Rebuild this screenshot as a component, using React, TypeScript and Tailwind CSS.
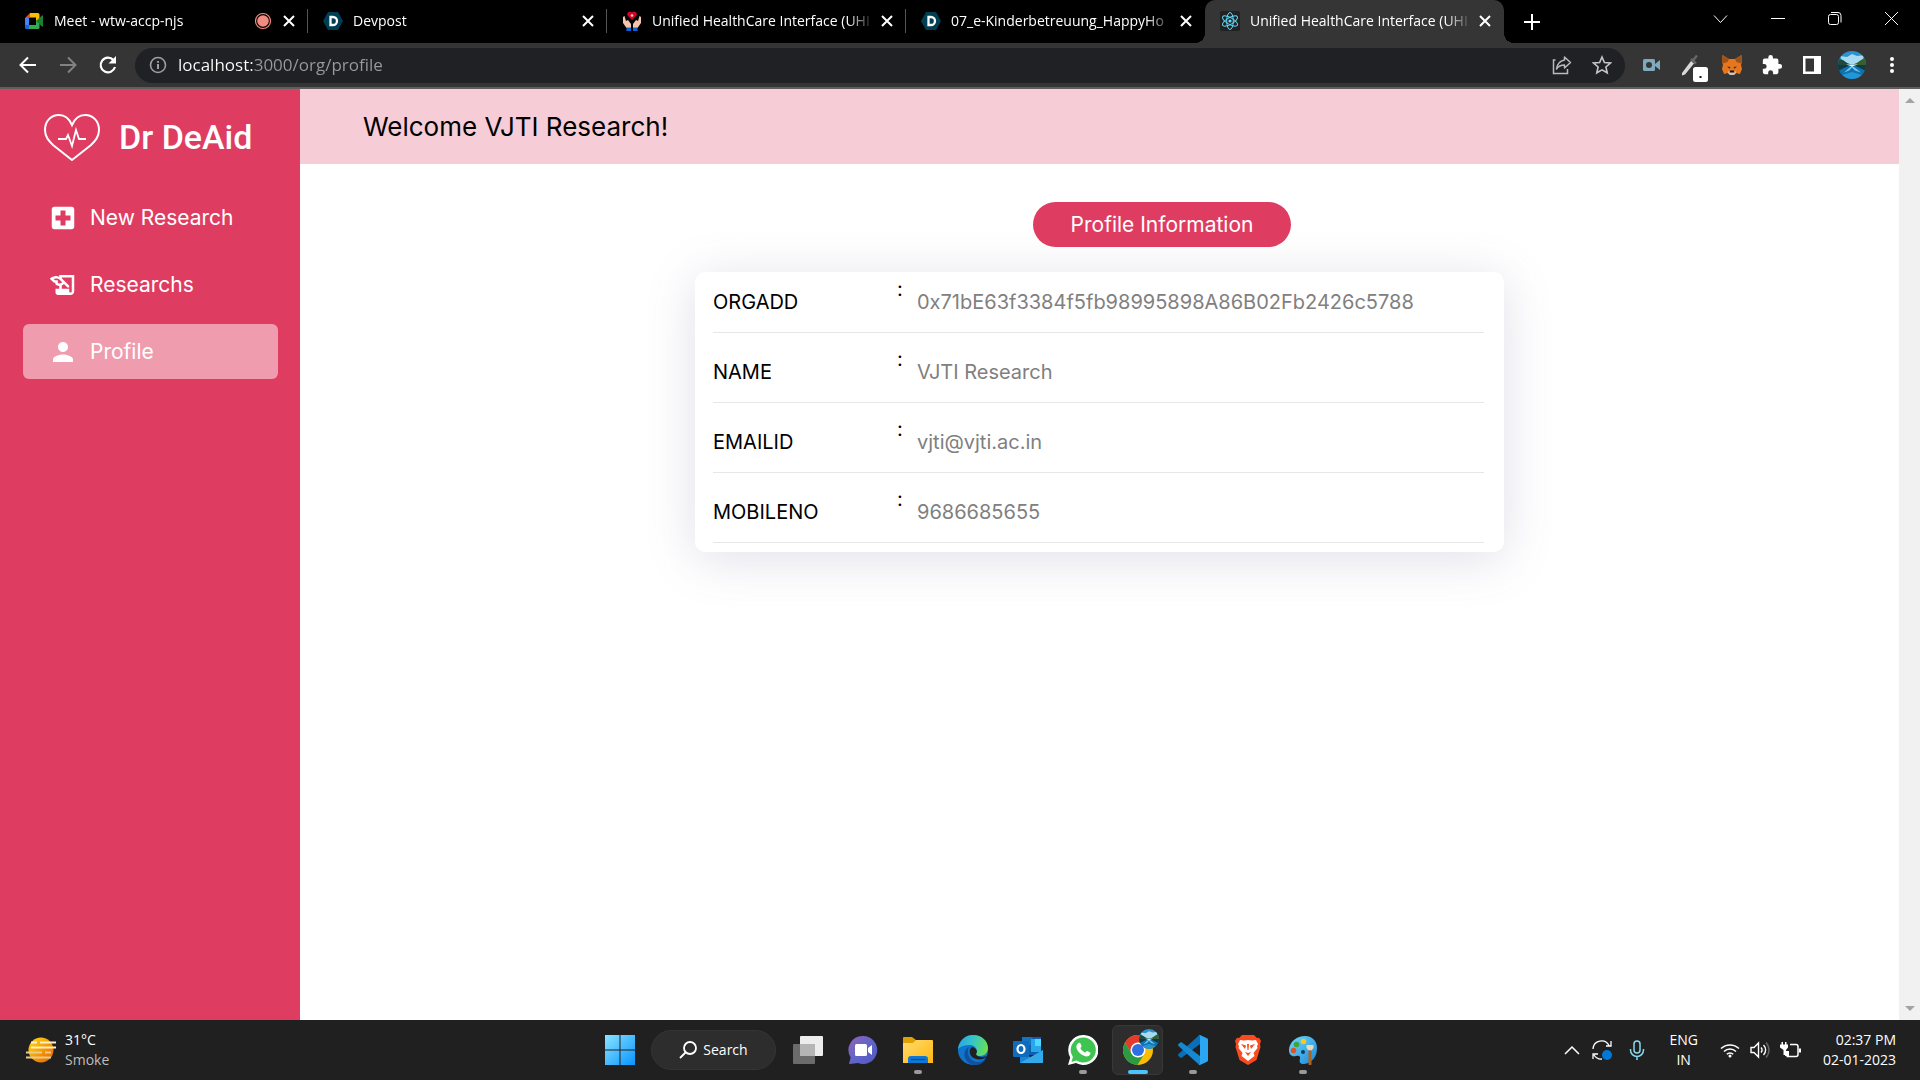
import { useState, type ReactNode } from "react";
import { MdHistoryEdu, MdLocalHospital, MdPerson } from "react-icons/md";

type Tab = {
  title: string;
  icon: ReactNode;
  recording?: boolean;
};

const tabs: Tab[] = [
  { title: "Meet - wtw-accp-njs", icon: <MeetIcon />, recording: true },
  { title: "Devpost", icon: <DevpostIcon /> },
  { title: "Unified HealthCare Interface (UHI", icon: <HandsIcon /> },
  { title: "07_e-Kinderbetreuung_HappyHo", icon: <DevpostIcon /> },
  { title: "Unified HealthCare Interface (UHI", icon: <ReactIcon /> },
];

const navItems = [
  { label: "New Research", href: "#new", Icon: MdLocalHospital },
  { label: "Researchs", href: "#researchs", Icon: MdHistoryEdu },
  { label: "Profile", href: "#profile", Icon: MdPerson },
];

const profile = [
  { label: "ORGADD", value: "0x71bE63f3384f5fb98995898A86B02Fb2426c5788" },
  { label: "NAME", value: "VJTI Research" },
  { label: "EMAILID", value: "vjti@vjti.ac.in" },
  { label: "MOBILENO", value: "9686685655" },
];

const apps = [
  { name: "Task View", icon: <TaskViewIcon />, mark: "" },
  { name: "Chat", icon: <ChatIcon />, mark: "" },
  { name: "File Explorer", icon: <ExplorerIcon />, mark: "open" },
  { name: "Edge", icon: <EdgeIcon />, mark: "" },
  { name: "Outlook", icon: <OutlookIcon />, mark: "" },
  { name: "WhatsApp", icon: <WhatsAppIcon />, mark: "open" },
  { name: "Chrome", icon: <ChromeIcon />, mark: "active" },
  { name: "VS Code", icon: <CodeIcon />, mark: "open" },
  { name: "Brave", icon: <BraveIcon />, mark: "" },
  { name: "Paint", icon: <PaintIcon />, mark: "open" },
];

export default function App() {
  return (
    <div className="flex h-screen flex-col overflow-hidden bg-white font-['Open_Sans',sans-serif]">
      <TabStrip />
      <Toolbar />
      <div className="flex min-h-0 flex-1 font-['Inter',sans-serif]">
        <Sidebar />
        <Main />
        <Scrollbar />
      </div>
      <Taskbar />
    </div>
  );
}

function TabStrip() {
  const [active, setActive] = useState(4);
  return (
    <div className="flex h-[43px] shrink-0 bg-black pl-[9px] text-sm text-white">
      <div className="flex min-w-0 flex-1">
        {tabs.map((tab, i) => (
          <div
            key={i}
            className={[
              "relative flex w-[299px] min-w-0 items-center pr-[10px] pb-px pl-[15px]",
              i === active ? "rounded-t-[10px] bg-[#353535]" : "",
            ].join(" ")}
          >
            {i === active && (
              <>
                <span className="absolute bottom-0 -left-[10px] h-[10px] w-[10px] bg-[radial-gradient(circle_at_0_0,#000_10px,#353535_10px)]" />
                <span className="absolute -right-[10px] bottom-0 h-[10px] w-[10px] bg-[radial-gradient(circle_at_100%_0,#000_10px,#353535_10px)]" />
              </>
            )}
            {i !== active && i !== active - 1 && (
              <span className="absolute right-0 h-6 w-px bg-[#555]" />
            )}
            <button
              type="button"
              onClick={() => setActive(i)}
              className="flex min-w-0 flex-1 items-center gap-[10px] text-left"
            >
              {tab.icon}
              <span className="min-w-0 flex-1 overflow-hidden whitespace-nowrap [mask-image:linear-gradient(to_right,#000_88%,transparent)]">
                {tab.title}
              </span>
            </button>
            {tab.recording && (
              <svg viewBox="0 0 18 18" className="mx-1 h-[18px] w-[18px] shrink-0">
                <circle cx="9" cy="9" r="7.5" fill="none" stroke="#f28b82" strokeWidth="1.2" />
                <circle cx="9" cy="9" r="5.8" fill="#f28b82" />
              </svg>
            )}
            <button type="button" aria-label="Close tab" className="ml-1 flex h-[18px] w-[18px] shrink-0 items-center justify-center">
              <svg viewBox="0 0 12 12" className="h-3 w-3 stroke-white" strokeWidth="2">
                <path d="M1 1l10 10M11 1L1 11" />
              </svg>
            </button>
          </div>
        ))}
        <button type="button" aria-label="New tab" className="ml-[19px] flex w-[18px] items-center justify-center">
          <svg viewBox="0 0 16 16" className="h-4 w-4 stroke-white" strokeWidth="2">
            <path d="M8 0v16M0 8h16" />
          </svg>
        </button>
      </div>
      <div className="flex h-[38px] shrink-0 items-center">
        <WindowButton label="Search tabs">
          <path d="M1 4.500l6.500 7 6.500-7" />
        </WindowButton>
        <WindowButton label="Minimize">
          <path d="M1 7.500h14" />
        </WindowButton>
        <WindowButton label="Restore">
          <rect x="1.500" y="3.500" width="10" height="10" rx="2" />
          <path d="M4 1.500h7a3 3 0 0 1 3 3v7" />
        </WindowButton>
        <WindowButton label="Close">
          <path d="M1 1l13 13M14 1L1 14" />
        </WindowButton>
      </div>
    </div>
  );
}

function WindowButton({ label, children }: { label: string; children: ReactNode }) {
  return (
    <button type="button" aria-label={label} className="flex h-full w-[57px] items-center justify-center">
      <svg viewBox="0 0 16 16" className="h-4 w-4 fill-none stroke-white">
        {children}
      </svg>
    </button>
  );
}

function ToolButton({ label, children }: { label: string; children: ReactNode }) {
  return (
    <button type="button" aria-label={label} className="flex h-9 w-10 shrink-0 items-center justify-center">
      {children}
    </button>
  );
}

function Toolbar() {
  return (
    <div className="flex h-[46px] shrink-0 items-center border-b-2 border-[#5f5f5f] bg-[#353535] px-2">
      <ToolButton label="Back">
        <svg viewBox="0 0 20 20" className="h-5 w-5 fill-none stroke-white" strokeWidth="2">
          <path d="M18 10H3M10 2.500L2.500 10l7.500 7.500" />
        </svg>
      </ToolButton>
      <ToolButton label="Forward">
        <svg viewBox="0 0 20 20" className="h-5 w-5 fill-none stroke-[#828282]" strokeWidth="2">
          <path d="M2 10h15M10 2.500l7.500 7.500-7.500 7.500" />
        </svg>
      </ToolButton>
      <ToolButton label="Reload">
        <svg viewBox="0 0 20 20" className="h-5 w-5 fill-none stroke-white" strokeWidth="2.200">
          <path d="M17 12a7.300 7.300 0 1 1-1.600-6.900L17 7" />
          <path d="M18 1v7.500h-7.500z" fill="white" stroke="none" />
        </svg>
      </ToolButton>
      <div className="ml-[7px] flex h-[35px] min-w-0 flex-1 items-center rounded-full bg-[#202124] pr-[3px] pl-[14px]">
        <svg viewBox="0 0 18 18" className="h-[18px] w-[18px] shrink-0 fill-none stroke-[#9aa0a6]" strokeWidth="1.600">
          <circle cx="9" cy="9" r="7.500" />
          <path d="M9 8v5M9 5v1.800" strokeWidth="2" />
        </svg>
        <input
          type="text"
          aria-label="Address"
          defaultValue="localhost:3000/org/profile"
          className="ml-[11px] min-w-0 flex-1 bg-[linear-gradient(to_right,#fff_75px,#9a9a9a_75px)] bg-clip-text text-[17px] text-transparent outline-none"
        />
        <ToolButton label="Share">
          <svg viewBox="0 0 20 20" className="h-5 w-5 fill-none stroke-[#b8babd]" strokeWidth="1.500">
            <path d="M3.500 5H1.500v13.500h14V14" />
            <path d="M12.500 2l6 5.500-6 5.500V10C9 10 6.500 11 4.500 14c.5-4.500 3-8 8-9z" strokeLinejoin="round" />
          </svg>
        </ToolButton>
        <ToolButton label="Bookmark">
          <svg viewBox="0 0 20 20" className="h-5 w-5 fill-none stroke-[#c4c6c9]" strokeWidth="1.600">
            <path d="M10 2l2.400 5.500 6 .5-4.500 4 1.300 5.800L10 14.800l-5.200 3L6.100 12 1.600 8l6-.5z" />
          </svg>
        </ToolButton>
      </div>
      <div className="ml-[7px] flex shrink-0 items-center">
        <ToolButton label="Recorder">
          <svg viewBox="0 0 18 14" className="h-[14px] w-[18px]">
            <rect y="1" width="12" height="12" rx="1.500" fill="#7fa9bd" />
            <path d="M12 6l5-4v10l-5-4z" fill="#7fa9bd" />
            <circle cx="6" cy="7" r="3" fill="#353535" />
          </svg>
        </ToolButton>
        <ToolButton label="Color picker">
          <svg viewBox="0 0 28 30" className="mt-2 ml-[6px] h-[30px] w-7">
            <path d="M1 19L10 7l3 2.500L4 20.500l-3 1z" fill="#d9d9d9" />
            <path d="M10 5l5 4.500M12 6.500L16 1.500" stroke="#666" strokeWidth="2.500" />
            <rect x="12" y="13" width="15" height="15" rx="2.500" fill="white" />
            <rect x="18.500" y="22" width="2" height="2" fill="#111" />
          </svg>
        </ToolButton>
        <ToolButton label="MetaMask">
          <svg viewBox="0 0 20 20" className="h-5 w-5">
            <path d="M.5 0L7 4h6l6.500-4 .5 7-1 3 1 4-2 5-4-1-2 2H8l-2-2-4 1-2-5 1-4-1-3z" fill="#e8761c" />
            <path d="M.5 0L7 4 5.500 7 1 8.500 0 7zM19.500 0L13 4l1.500 3L19 8.500l1-1.500z" fill="#a0521d" />
            <path d="M5 11.500l3.500.5-1 1.800zM15 11.500l-3.500.5 1 1.800z" fill="#233447" />
            <path d="M6.500 16h7l.5 2-2 2H8l-2-2z" fill="#d7c1b3" />
            <path d="M8 15.500h4l.5 2h-5z" fill="#161616" />
          </svg>
        </ToolButton>
        <ToolButton label="Extensions">
          <svg viewBox="0 0 24 24" className="h-[22px] w-[22px] fill-white">
            <path d="M20.500 11H19V7a2 2 0 0 0-2-2h-4V3.500a2.500 2.500 0 0 0-5 0V5H4a2 2 0 0 0-2 2v3.800h1.500a2.700 2.700 0 0 1 0 5.400H2V20a2 2 0 0 0 2 2h3.800v-1.500a2.700 2.700 0 0 1 5.400 0V22H17a2 2 0 0 0 2-2v-4h1.500a2.500 2.500 0 0 0 0-5z" />
          </svg>
        </ToolButton>
        <ToolButton label="Side panel">
          <svg viewBox="0 0 18 18" className="h-[18px] w-[18px]">
            <path d="M0 0h18v18H0z" fill="white" />
            <path d="M2.500 2.500H11v13H2.500z" fill="#353535" />
          </svg>
        </ToolButton>
        <ToolButton label="Profile">
          <LakeAvatar className="h-7 w-7" />
        </ToolButton>
        <ToolButton label="Menu">
          <svg viewBox="0 0 4 20" className="h-5 w-1 fill-white">
            <circle cx="2" cy="4" r="2" />
            <circle cx="2" cy="10" r="2" />
            <circle cx="2" cy="16" r="2" />
          </svg>
        </ToolButton>
      </div>
    </div>
  );
}

function Sidebar() {
  const [current, setCurrent] = useState("Profile");
  return (
    <aside className="w-[300px] shrink-0 bg-[#df3c61] pr-[22px] pl-[23px] text-white">
      <div className="flex items-center gap-[18px] pt-[24px] pl-5">
        <svg viewBox="0 0 58 50" className="h-[50px] w-[58px] fill-none stroke-white" strokeWidth="2">
          <path d="M29 12C26 5 21 2 16 2 8 2 2 8 2 17c0 7 4 11 8 15l19 15 19-15c4-4 8-8 8-15 0-9-6-15-14-15-5 0-10 3-13 10z" />
          <path d="M15 26h8l2-4 4 11 4-16 3 9h7" strokeWidth="1.800" />
        </svg>
        <span className="pb-[2px] font-['Roboto',sans-serif] text-[34px] leading-[48px] font-medium whitespace-nowrap">
          Dr DeAid
        </span>
      </div>
      <nav className="mt-[27px] flex flex-col gap-3">
        {navItems.map(({ label, href, Icon }) => (
          <a
            key={label}
            href={href}
            onClick={() => setCurrent(label)}
            className={[
              "flex h-[55px] items-center gap-3 rounded-md pl-[25px] text-[21px]",
              label === current ? "bg-[#f09caf]" : "",
            ].join(" ")}
          >
            <Icon size={30} />
            {label}
          </a>
        ))}
      </nav>
    </aside>
  );
}

function Main() {
  return (
    <main className="min-w-0 flex-1 bg-white text-black">
      <header className="flex h-[75px] items-center bg-[#f6ccd6] px-[63px]">
        <h1 className="text-[26px]">Welcome VJTI Research!</h1>
      </header>
      <div className="flex justify-center pt-[38px] pl-[125px]">
        <button type="button" className="h-[45px] w-[258px] rounded-full bg-[#df3c61] text-[21px] text-white">
          Profile Information
        </button>
      </div>
      <dl className="mx-auto mt-[25px] flex w-full max-w-[809px] flex-col gap-[9px] rounded-[10px] bg-white pr-5 pb-[9px] pl-[18px] text-xl shadow-[0_7px_50px_rgba(100,100,150,0.2)]">
        {profile.map(({ label, value }) => (
          <div key={label} className="flex h-[61px] items-center border-b border-[#e5e7eb]">
            <dt className="flex w-[204px] self-stretch">
              <span className="w-[184px] self-center">{label}</span>
              <span className="pt-[3px]">:</span>
            </dt>
            <dd className="text-[#808080]">{value}</dd>
          </div>
        ))}
      </dl>
    </main>
  );
}

function Scrollbar() {
  return (
    <div className="flex w-[21px] shrink-0 flex-col items-center justify-between bg-[#f1f1f1] py-[9px]">
      <svg viewBox="0 0 10 5" className="h-[5px] w-[10px] fill-[#a3a3a3]">
        <path d="M0 5l5-5 5 5z" />
      </svg>
      <svg viewBox="0 0 10 5" className="h-[5px] w-[10px] fill-[#a3a3a3]">
        <path d="M0 0l5 5 5-5z" />
      </svg>
    </div>
  );
}

function Taskbar() {
  return (
    <footer className="flex h-[60px] shrink-0 items-center bg-[#202020] text-sm text-white">
      <div className="flex flex-1 items-center gap-[9px] pl-[26px]">
        <svg viewBox="0 0 30 26" className="h-[26px] w-[30px]">
          <defs>
            <linearGradient id="sun" x1="0" y1="0" x2="1" y2="1">
              <stop offset="0.2" stopColor="#fdc50d" />
              <stop offset="1" stopColor="#ea5a00" />
            </linearGradient>
          </defs>
          <circle cx="15" cy="13" r="12.500" fill="url(#sun)" />
          <path d="M5 5.500h6M14 5.500h16M5 10.500h25" stroke="#fff0c2" strokeWidth="2.200" />
          <path d="M0 15.500h16M19 15.500h6M0 20.500h25" stroke="#e6cd8e" strokeWidth="2.200" />
        </svg>
        <div className="leading-5">
          <div>31°C</div>
          <div className="text-[#bdbdbd]">Smoke</div>
        </div>
      </div>
      <div className="flex items-center">
        <button type="button" aria-label="Start" className="flex h-[50px] w-[55px] items-center justify-center">
          <svg viewBox="0 0 30 30" className="h-[30px] w-[30px]">
            <defs>
              <linearGradient id="win" x1="0" y1="0" x2="30" y2="30" gradientUnits="userSpaceOnUse">
                <stop stopColor="#8be4ff" />
                <stop offset="1" stopColor="#0794ff" />
              </linearGradient>
            </defs>
            <path d="M0 0h14.500v14.500H0zM15.500 0H30v14.500H15.500zM0 15.500h14.500V30H0zM15.500 15.500H30V30H15.500z" fill="url(#win)" />
          </svg>
        </button>
        <button
          type="button"
          className="mx-1 flex h-10 w-[125px] items-center justify-center gap-[6px] rounded-full border border-[#343434] bg-[#2d2d2d]"
        >
          <svg viewBox="0 0 18 18" className="h-[18px] w-[18px] fill-none stroke-white" strokeWidth="1.800">
            <circle cx="11" cy="7" r="6" />
            <path d="M6.500 11.500L1 17" />
          </svg>
          Search
        </button>
        {apps.map(({ name, icon, mark }) => (
          <button
            key={name}
            type="button"
            aria-label={name}
            className={[
              "relative flex h-[50px] items-center justify-center",
              mark === "active" ? "mx-[2px] w-[51px] rounded-md border border-[#383838] bg-[#2d2d2d]" : "w-[55px]",
            ].join(" ")}
          >
            {icon}
            {mark === "open" && <span className="absolute bottom-[1px] h-1 w-2 rounded-full bg-[#9a9a9a]" />}
            {mark === "active" && <span className="absolute bottom-0 h-1 w-5 rounded-full bg-[#4cc2ff]" />}
          </button>
        ))}
      </div>
      <div className="flex flex-1 items-center justify-end pr-6">
        <svg viewBox="0 0 16 10" className="h-[10px] w-4 fill-none stroke-white" strokeWidth="1.500">
          <path d="M1 9l7-7 7 7" />
        </svg>
        <svg viewBox="0 0 20 20" className="ml-3 h-5 w-5 fill-none stroke-white" strokeWidth="1.300">
          <path d="M1 9a8.500 8.500 0 0 1 16-3.500M19 1v5h-5M1 19v-5h5M2 15c2 3 5 4.500 8 4" />
          <circle cx="15" cy="15" r="5" fill="#0078d7" stroke="none" />
        </svg>
        <svg viewBox="0 0 16 20" className="ml-[17px] h-5 w-4 fill-none stroke-[#86d9f0]" strokeWidth="1.500">
          <rect x="5" y="1" width="6" height="12" rx="3" />
          <path d="M1.500 9v1a6.500 6.500 0 0 0 13 0V9M8 16.500V20" />
        </svg>
        <div className="ml-6 text-center leading-5">
          <div>ENG</div>
          <div>IN</div>
        </div>
        <svg viewBox="0 0 20 16" className="ml-[22px] h-4 w-5 fill-none stroke-white" strokeWidth="1.500">
          <path d="M1 6.500a13 13 0 0 1 18 0M4 9.500a8.500 8.500 0 0 1 12 0M6.800 12.300a4.500 4.500 0 0 1 6.400 0" />
          <circle cx="10" cy="14" r="1.500" fill="white" stroke="none" />
        </svg>
        <svg viewBox="0 0 20 18" className="ml-[10px] h-[18px] w-5 fill-none stroke-white" strokeWidth="1.400">
          <path d="M1 6.500h3L8.500 2v14L4 11.500H1zM11 6.500a3.500 3.500 0 0 1 0 5M13.500 4a7 7 0 0 1 0 10" />
          <path d="M16 1.500a11 11 0 0 1 0 15" stroke="#666" />
        </svg>
        <svg viewBox="0 0 21 16" className="ml-[10px] h-4 w-[21px] fill-none stroke-white" strokeWidth="1.500">
          <path d="M10 2.500h6a2 2 0 0 1 2 2v8a2 2 0 0 1-2 2H6.500" />
          <path d="M19 6.500h2v4h-2zM6 9h3v5H5z" fill="white" stroke="none" />
          <path d="M1.500 0h1.500v2.500h2V0h1.500v2.500H8V5.500L6 8v5H3.500V8L0 5.500V2.500h1.500z" fill="white" stroke="none" />
        </svg>
        <div className="ml-[22px] text-right leading-5">
          <div>02:37 PM</div>
          <div>02-01-2023</div>
        </div>
      </div>
    </footer>
  );
}

function MeetIcon() {
  return (
    <svg viewBox="0 0 20 16" className="h-4 w-5 shrink-0">
      <path d="M1 5l5-5v5z" fill="#ea4335" />
      <path d="M1 5h4v7H1z" fill="#4285f4" />
      <path d="M1 12h4v4H2a1 1 0 0 1-1-1z" fill="#1967d2" />
      <path d="M6 0h8a1.500 1.500 0 0 1 1.500 1.500V7L12 8V4.500H6z" fill="#fbbc04" />
      <path d="M5 12h7V8l3.500-1v7.500A1.500 1.500 0 0 1 14 16H5z" fill="#34a853" />
      <path d="M12 8l6-5.500c.5-.4 1-.2 1 .4v10.200c0 .6-.5.8-1 .4z" fill="#188038" />
    </svg>
  );
}

function DevpostIcon() {
  return (
    <svg viewBox="0 0 20 18" className="h-[18px] w-5 shrink-0">
      <path d="M5 0h10l5 9-5 9H5L0 9z" fill="#003e54" />
      <path d="M7.500 5H10a4 4 0 0 1 0 8H7.500z" fill="none" stroke="white" strokeWidth="2.300" />
    </svg>
  );
}

function HandsIcon() {
  return (
    <svg viewBox="0 0 20 20" className="h-5 w-5 shrink-0">
      <path d="M10 9L6 5a2.500 2.500 0 0 1 4-3.500A2.500 2.500 0 0 1 14 5z" fill="#d80027" />
      <circle cx="10" cy="4.500" r="1.300" fill="#cfd5dc" />
      <path d="M1 6l1.500-1 1.500 5 2-1 3 4v4H4.500L1 12zM19 6l-1.500-1-1.500 5-2-1-3 4v4h4.500L19 12z" fill="#f4c4ac" />
      <path d="M4.500 16.500H9V20H4.500zM11 16.500h4.500V20H11z" fill="#0b64d8" />
    </svg>
  );
}

function ReactIcon() {
  return (
    <svg viewBox="0 0 20 20" className="h-5 w-5 shrink-0">
      <rect width="20" height="20" rx="2" fill="#222" />
      <g fill="none" stroke="#61dafb" strokeWidth="1">
        <ellipse cx="10" cy="10" rx="8.500" ry="3.300" transform="rotate(30 10 10)" />
        <ellipse cx="10" cy="10" rx="8.500" ry="3.300" transform="rotate(90 10 10)" />
        <ellipse cx="10" cy="10" rx="8.500" ry="3.300" transform="rotate(150 10 10)" />
      </g>
      <circle cx="10" cy="10" r="1.600" fill="#61dafb" />
    </svg>
  );
}

function LakeAvatar({ className }: { className: string }) {
  return (
    <svg viewBox="0 0 28 28" className={`${className} overflow-hidden rounded-full`}>
      <path d="M0 0h28v14H0z" fill="#2b93cf" />
      <path d="M0 14h28v14H0z" fill="#0f72b0" />
      <path d="M2 5l7 1 5-3 5 2 8-1-3 5-7 4h-6L4 9z" fill="#a9daf0" />
      <path d="M0 8l5 1 4 3 5 2H0z" fill="#1d4a3c" />
      <path d="M28 7l-5 2-4 3-5 2h14z" fill="#355f2d" />
      <path d="M0 14h13l-7 3-6 3zM28 14H15l7 3 6 3z" fill="#0f3a45" />
      <path d="M14 14.500l-8 7 5-2 3-3 3 3 6 2z" fill="#7cc6ea" />
      <path d="M8 13.500h12l-6 2z" fill="#e2f4fb" />
      <path d="M4 24l10-3 10 3-5 4H9z" fill="#2496d6" />
    </svg>
  );
}

function TaskViewIcon() {
  return (
    <svg viewBox="0 0 30 28" className="h-7 w-[30px]">
      <rect y="8" width="22" height="20" rx="1" fill="#6b6b6b" />
      <rect x="7" width="23" height="20" rx="1" fill="#ededed" />
      <path d="M7 8h15v12H7z" fill="#b5b5b5" />
    </svg>
  );
}

function ChatIcon() {
  return (
    <svg viewBox="0 0 30 30" className="h-[30px] w-[30px]">
      <defs>
        <linearGradient id="chat" x1="0" y1="0" x2="1" y2="1">
          <stop stopColor="#9163b8" />
          <stop offset="0.5" stopColor="#6264c7" />
          <stop offset="1" stopColor="#5058c8" />
        </linearGradient>
      </defs>
      <path d="M15 1a14 14 0 1 1-5 27l-8 1c-1 0-1-.5-.8-1l1.500-5.500A14 14 0 0 1 15 1z" fill="url(#chat)" />
      <rect x="7" y="9" width="12" height="12" rx="1.500" fill="white" />
      <path d="M20 13l4-3v10l-4-3z" fill="white" />
    </svg>
  );
}

function ExplorerIcon() {
  return (
    <svg viewBox="0 0 30 28" className="h-7 w-[30px]">
      <defs>
        <linearGradient id="folder" x1="0" y1="0" x2="1" y2="1">
          <stop stopColor="#ffdc70" />
          <stop offset="1" stopColor="#ffb70d" />
        </linearGradient>
      </defs>
      <path d="M0 2a1 1 0 0 1 1-1h8l4 3h10v8H0z" fill="#e0a000" />
      <path d="M0 7h10l3-3h16a1 1 0 0 1 1 1v22H0z" fill="url(#folder)" />
      <path d="M5 27v-4a3 3 0 0 1 3-3h14a3 3 0 0 1 3 3v4z" fill="#0f78d4" />
      <path d="M8 23.500h14" stroke="#07508f" strokeWidth="1.300" />
    </svg>
  );
}

function EdgeIcon() {
  return (
    <svg viewBox="0 0 30 30" className="h-[30px] w-[30px]">
      <defs>
        <linearGradient id="edgeTop" x1="0" y1="0.300" x2="1" y2="0.500">
          <stop stopColor="#2aa5e6" />
          <stop offset="0.5" stopColor="#36c7c4" />
          <stop offset="1" stopColor="#6be04f" />
        </linearGradient>
      </defs>
      <circle cx="15" cy="15" r="15" fill="#1074cc" />
      <path d="M0 14C1 6 7 0 15 0c9 0 15 6 15 13 0 5-4 8-8 8-3 0-5-1-4-3 2-3 0-7-5-8-5-.5-10 1-13 4z" fill="url(#edgeTop)" />
      <path d="M11 12c-3 6 0 14 8 15 4 .5 7-1 9-4-3 9-17 10-21 0-1.500-5 0-9 4-11z" fill="#10509e" />
      <path d="M14 12c-4 3-3 10 4 12 4 1 8 0 10-2l2-1c-3 1-11 2-12-2 2-2 1-6-4-7z" fill="#202020" />
    </svg>
  );
}

function OutlookIcon() {
  return (
    <svg viewBox="0 0 30 28" className="h-7 w-[30px]">
      <path d="M9 1h19v18H9z" fill="#0f5fae" />
      <path d="M9 1h10v8H9z" fill="#1672c4" />
      <path d="M18 3h10v13H18z" fill="#28a8ea" />
      <path d="M22 3h6v7h-6z" fill="#50d9ff" />
      <path d="M7 15l12 7 11-8v13H7z" fill="#1784d8" />
      <path d="M7 27l23-13v12a1 1 0 0 1-1 1z" fill="#32a9e8" />
      <rect y="5" width="16" height="16" rx="1" fill="#0f6cbd" />
      <ellipse cx="8" cy="13" rx="3.500" ry="4" fill="none" stroke="white" strokeWidth="2.200" />
    </svg>
  );
}

function WhatsAppIcon() {
  return (
    <svg viewBox="0 0 30 30" className="h-[30px] w-[30px]">
      <path d="M15 0a15 15 0 1 1-7 28L0 30l2.200-7.500A15 15 0 0 1 15 0z" fill="white" />
      <path d="M15 2.500A12.500 12.500 0 1 1 8.500 25.500l-5 1.500 1.400-5A12.500 12.500 0 0 1 15 2.500z" fill="#3fc351" />
      <path d="M10.500 8c1-.6 1.700-.3 2 .5l1 2.500c.3.800-1.200 1.800-1 2.300 1 2 2.500 3.400 4.600 4.200.6.200 1.400-1.700 2-1.500l3 1.500c.5.300.3 1.500 0 2-1 2-3.500 2.300-5.500 1.500-4-1.500-6.500-4-8-7.500-.6-1.500-.1-4.500 1.900-5.500z" fill="white" />
    </svg>
  );
}

function ChromeIcon() {
  return (
    <span className="relative flex h-[30px] w-[30px]">
      <svg viewBox="0 0 30 30" className="h-[30px] w-[30px]">
        <circle cx="15" cy="15" r="15" fill="#fbbc04" />
        <path d="M2 7.500A15 15 0 0 1 28 7.500H15l-6.500 11z" fill="#e33b2e" />
        <path d="M2 7.500l6.500 11L15 22l5-1-5.500 9A15 15 0 0 1 2 7.500z" fill="#2a9a45" />
        <circle cx="15" cy="15" r="7.500" fill="white" />
        <circle cx="15" cy="15" r="6" fill="#2f6fe4" />
      </svg>
      <LakeAvatar className="absolute -top-[6px] -right-[6px] h-5 w-5" />
    </span>
  );
}

function CodeIcon() {
  return (
    <svg viewBox="0 0 30 30" className="h-[30px] w-[30px]">
      <path d="M22 0v9L4 22.500c-.6.500-1.200.5-1.700 0L.5 21c-.6-.6-.6-1.300 0-2L20.500.8z" fill="#0a6fb8" />
      <path d="M22 30v-9L4 7.500c-.6-.5-1.200-.5-1.700 0L.5 9c-.6.600-.6 1.300 0 2l20 18.200z" fill="#1488d0" />
      <path d="M22 0l7 3.200c.6.300 1 .8 1 1.500v20.600c0 .7-.4 1.200-1 1.500L22 30c-.8 0-1.500-.3-2-.9.800.6 2 .2 2-1V1.900c0-1.200-1.200-1.600-2-1 .5-.6 1.200-.9 2-.9z" fill="#2aa6f2" />
    </svg>
  );
}

function BraveIcon() {
  return (
    <svg viewBox="0 0 26 30" className="h-[30px] w-[26px]">
      <path d="M7 0h12l3 3 2-.3L26 6l-1 3 .5 3-4 13L13 30l-8.500-5-4-13L1 9 0 6l2-3.300L4 3z" fill="#fb4a1d" />
      <path d="M13 5l4 .5 4-.5 2 4-1 2 .5 2-4 5 1 3L13 26l-6.500-5 1-3-4-5 .5-2-1-2 2-4 4 .5z" fill="white" />
      <path d="M6 9l5 1.500-1 3.500zM20 9l-5 1.500 1 3.500zM10 17l3 1 3-1-3 4zM12 9h2l-.5 6h-1z" fill="#fb4a1d" />
    </svg>
  );
}

function PaintIcon() {
  return (
    <svg viewBox="0 0 30 30" className="h-[30px] w-[30px]">
      <defs>
        <linearGradient id="palette" x1="0" y1="0" x2="1" y2="1">
          <stop stopColor="#6fdcfb" />
          <stop offset="1" stopColor="#1a86d8" />
        </linearGradient>
      </defs>
      <path d="M17 1c8 0 12 6 12 12 0 9-5 15-13 16-4 0-5-2-4-5 .5-3-1-4-4-3-4 1-7-1-7-6C1 7 9 1 17 1z" fill="url(#palette)" />
      <circle cx="5.500" cy="15.500" r="2.800" fill="#e0522f" />
      <circle cx="8.500" cy="9.500" r="2.800" fill="#3fa535" />
      <circle cx="15.500" cy="6.500" r="2.800" fill="#fdc71a" />
      <circle cx="15" cy="17" r="2" fill="#123c66" />
      <path d="M18.500 10h7v3l-2 2.500h-3l-2-2.500z" fill="#ead7bd" />
      <path d="M20.500 15.500h3V29a1.500 1.500 0 0 1-3 0z" fill="#b0631d" />
    </svg>
  );
}
